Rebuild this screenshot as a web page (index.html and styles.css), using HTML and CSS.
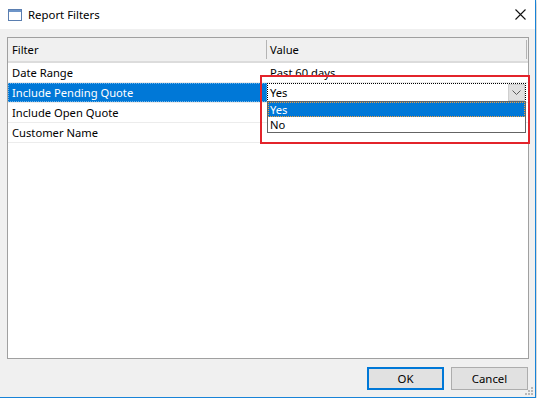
FILE: index.html
```html
<!DOCTYPE html>
<html>
<head>
<meta charset="utf-8">
<link rel="stylesheet" href="styles.css">
</head>
<body>
<div class="window">
  <div class="titlebar">
    <svg class="appicon" width="14" height="12" viewBox="0 0 14 12">
      <rect x="0.5" y="0.5" width="13" height="11" fill="#ffffff" stroke="#5a7eb0"/>
      <rect x="1" y="1" width="12" height="2" fill="#6e95c8"/>
    </svg>
    <span class="title">Report Filters</span>
    <svg class="close" width="11" height="11" viewBox="0 0 11 11">
      <path d="M0.5 0.5 L10.5 10.5 M10.5 0.5 L0.5 10.5" stroke="#111" stroke-width="1.1" fill="none"/>
    </svg>
  </div>
  <div class="client">
    <div class="listbox">
      <div class="header">
        <div class="hcell c1">Filter</div>
        <div class="hcell c2">Value</div>
      </div>
      <div class="row">
        <div class="cell c1">Date Range</div>
        <div class="cell c2">Past 60 days</div>
      </div>
      <div class="row selected">
        <div class="cell c1">Include Pending Quote</div>
        <div class="cell c2 editing">
          <div class="combo">
            <span class="combo-text">Yes</span>
            <span class="dropbtn">
              <svg width="9" height="6" viewBox="0 0 9 6"><path d="M0.5 0.5 L4.5 4.5 L8.5 0.5" stroke="#5a5a5a" fill="none" stroke-width="1"/></svg>
            </span>
            <div class="droplist">
              <div class="item active">Yes</div>
              <div class="item">No</div>
            </div>
          </div>
        </div>
      </div>
      <div class="row">
        <div class="cell c1">Include Open Quote</div>
        <div class="cell c2"></div>
      </div>
      <div class="row">
        <div class="cell c1">Customer Name</div>
        <div class="cell c2"></div>
      </div>
    </div>
    <div class="buttons">
      <button class="btn default">OK</button>
      <button class="btn">Cancel</button>
    </div>
  </div>
  <div class="annotation"></div>
  <svg class="grip" width="8" height="8" viewBox="0 0 8 8">
    <rect x="6" y="0" width="2" height="2" fill="#b8b8b8"/>
    <rect x="3" y="3" width="2" height="2" fill="#b8b8b8"/>
    <rect x="6" y="3" width="2" height="2" fill="#b8b8b8"/>
    <rect x="0" y="6" width="2" height="2" fill="#b8b8b8"/>
    <rect x="3" y="6" width="2" height="2" fill="#b8b8b8"/>
    <rect x="6" y="6" width="2" height="2" fill="#b8b8b8"/>
  </svg>
</div>
</body>
</html>
```
FILE: styles.css
```css
html, body {
  margin: 0;
  padding: 0;
  background: #ffffff;
}
body {
  font-family: "Noto Sans", "Open Sans", sans-serif;
  font-size: 11.2px;
  color: #000;
}
.window {
  position: relative;
  width: 535px;
  height: 397px;
  border-right: 1px solid #1883d7;
  border-bottom: 1px solid #1883d7;
  box-shadow: 0 1px 5px rgba(0, 0, 0, 0.35);
  background: #f0f0f0;
  display: flex;
  flex-direction: column;
}
.titlebar {
  flex: none;
  height: 29px;
  background: #ffffff;
  display: flex;
  align-items: center;
  padding-left: 8px;
}
.appicon {
  margin-right: 6px;
  margin-top: 1px;
}
.title {
  font-size: 11.4px;
  line-height: 16px;
}
.close {
  margin-left: auto;
  margin-right: 9px;
}
.client {
  flex: 1;
  display: flex;
  flex-direction: column;
  padding: 8px 6px 0 7px;
}
.listbox {
  height: 322px;
  box-sizing: border-box;
  border: 1px solid #a0a0a0;
  background: #ffffff;
}
.header {
  display: flex;
  height: 25px;
  box-sizing: border-box;
  background: #f0f0f0;
  border-bottom: 2px solid #dcdcdc;
}
.hcell {
  box-sizing: border-box;
  height: 19px;
  margin-top: 2px;
  line-height: 19px;
}
.hcell.c1 {
  width: 259px;
  padding-left: 4px;
  border-right: 1px solid #b4b4b4;
}
.hcell.c2 {
  width: 260px;
  padding-left: 3px;
  border-right: 1px solid #b4b4b4;
}
.row {
  display: flex;
  height: 20px;
  box-sizing: border-box;
  border-bottom: 1px solid #ececec;
}
.cell {
  box-sizing: border-box;
  line-height: 19px;
  white-space: nowrap;
}
.cell.c1 {
  width: 259px;
  padding-left: 4px;
}
.cell.c2 {
  flex: 1;
  padding-left: 3px;
}
.row.selected .cell.c1 {
  background: #0078d7;
  color: #ffffff;
  outline: 1px dotted rgba(255, 255, 255, 0.45);
  outline-offset: -1px;
}
.cell.c2.editing {
  padding: 0 2px 0 0;
}
.combo {
  position: relative;
  height: 19px;
  box-sizing: border-box;
  border: 1px dotted #000;
  background: #fff;
  display: flex;
  align-items: center;
}
.combo-text {
  padding-left: 2px;
  line-height: 15px;
  flex: 1;
}
.dropbtn {
  width: 17px;
  height: 17px;
  box-sizing: border-box;
  background: #e0e0e0;
  border: 1px solid #cfcfcf;
  display: flex;
  align-items: center;
  justify-content: center;
}
.dropbtn svg {
  margin-top: 1px;
}
.droplist {
  position: absolute;
  top: 17px;
  left: -1px;
  right: -1px;
  height: 32px;
  box-sizing: border-box;
  border: 1px solid #646464;
  background: #ffffff;
  z-index: 2;
}
.item {
  height: 15px;
  line-height: 15px;
  padding-left: 2px;
  box-sizing: border-box;
}
.item.active {
  background: #0078d7;
  color: #ffffff;
  outline: 1px dotted #f0a040;
  outline-offset: -1px;
}
.buttons {
  display: flex;
  justify-content: flex-end;
  gap: 7px;
  margin-top: 8px;
  padding-right: 1px;
}
.btn {
  width: 77px;
  height: 23px;
  box-sizing: border-box;
  border: 1px solid #adadad;
  background: #e1e1e1;
  font-family: "Noto Sans", "Open Sans", sans-serif;
  font-size: 11.4px;
  color: #000;
  padding: 0;
}
.btn.default {
  border: 2px solid #0078d7;
}
.annotation {
  position: absolute;
  left: 260px;
  top: 75px;
  width: 270px;
  height: 69px;
  box-sizing: border-box;
  border: 2px solid #e3242b;
  z-index: 5;
}
.grip {
  position: absolute;
  right: 2px;
  bottom: 2px;
}
```
